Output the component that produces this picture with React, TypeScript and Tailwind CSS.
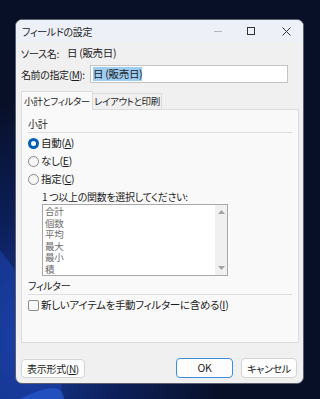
import React from "react";

const font = { fontFamily: '"Noto Sans CJK JP", "Noto Sans", sans-serif' };

function Radio({ checked, label, k }: { checked?: boolean; label: string; k: string }) {
  return (
    <div className="flex items-center h-[18px]">
      {checked ? (
        <span className="w-[11px] h-[11px] rounded-full bg-[#005fb8] flex items-center justify-center">
          <span className="w-[5px] h-[5px] rounded-full bg-white" />
        </span>
      ) : (
        <span className="w-[11px] h-[11px] rounded-full border border-[#8a8a8a] bg-[#f7f7f7]" />
      )}
      <span className="ml-[2px]">
        {label}(<span className="underline">{k}</span>)
      </span>
    </div>
  );
}

function Wallpaper() {
  return (
    <svg className="absolute inset-0" width="320" height="399" viewBox="0 0 320 399">
      <defs>
        <radialGradient id="g1" cx="0.1" cy="0.85" r="0.6">
          <stop offset="0" stopColor="#1a3fa8" />
          <stop offset="0.5" stopColor="#0d2160" />
          <stop offset="1" stopColor="#081029" />
        </radialGradient>
      </defs>
      <rect width="320" height="399" fill="#070d1d" />
      <rect width="320" height="399" fill="url(#g1)" opacity="0.9" />
      <path d="M0 250 C40 300 70 360 60 399 L0 399 Z" fill="#1c45b5" opacity="0.5" />
      <path d="M20 399 C50 385 62 384 64 399 Z" fill="#2a5ad0" opacity="0.7" />
    </svg>
  );
}

export default function App() {
  return (
    <div
      className="relative w-[320px] h-[399px] overflow-hidden text-[10.5px] tracking-[-0.3px] whitespace-nowrap text-[#1b1b1b] [font-feature-settings:'palt']"
      style={font}
    >
      <Wallpaper />
      <div className="relative pl-[15px] pt-[19px]">
        <div className="w-[289px] h-[365px] rounded-[7px] bg-[#f0f0f0] border border-[#5a5f6b] overflow-hidden flex flex-col">
          {/* title bar */}
          <div className="h-[22px] bg-[#eef0f8] flex items-center pl-[6px]">
            <span className="text-[10px] text-[#1b1b1b] flex-1 pt-[1px]">フィールドの設定</span>
            <span className="w-[8px] h-[1px] bg-[#b8b8b8] mr-[25px]" />
            <span className="w-[8px] h-[8px] border border-[#333] mr-[27px]" />
            <svg width="9" height="9" viewBox="0 0 9 9" className="mr-[12px]">
              <path d="M0.5 0.5 L8.5 8.5 M8.5 0.5 L0.5 8.5" stroke="#333" strokeWidth="1" />
            </svg>
          </div>
          <div className="flex flex-col px-[5px] flex-1">
            <div className="flex items-center h-[18px] mt-[2px] text-[10px]">
              <span>ソース名:</span>
              <span className="ml-[8px] text-[10.5px]">日 (販売日)</span>
            </div>
            <div className="flex items-center mt-[3px] h-[18px]">
              <span className="w-[69px] text-[10px] tracking-[-0.4px]">
                名前の指定(<span className="underline">M</span>):
              </span>
              <div className="w-[198px] h-[18px] bg-white border border-[#c4c4c4] flex items-center px-[2px]">
                <span className="bg-[#9ecdf2] leading-[14px]">日 (販売日)</span>
              </div>
            </div>
            {/* tabs */}
            <div className="flex mt-[8px] h-[19px] items-end relative z-10 text-[9.5px] tracking-[-0.4px]">
              <div className="h-[19px] w-[72px] bg-[#f9f9f9] border border-[#dcdcdc] border-b-0 flex items-center justify-center">
                小計とフィルター
              </div>
              <div className="h-[17px] w-[69px] bg-[#f0f0f0] border border-[#dcdcdc] border-l-0 flex items-center justify-center">
                レイアウトと印刷
              </div>
            </div>
            <div className="w-[278px] h-[234px] bg-[#f9f9f9] border border-[#dcdcdc] -mt-px px-[6px]">
              <div className="mt-[5px] h-[16px] text-[10px] flex items-center">小計</div>
              <div className="h-px bg-[#dedede] mt-[1px]" />
              <div className="mt-[1px] flex flex-col">
                <Radio checked label="自動" k="A" />
                <Radio label="なし" k="E" />
                <Radio label="指定" k="C" />
              </div>
              <div className="ml-[14px] h-[16px] text-[10px] flex items-center">1 つ以上の関数を選択してください:</div>
              <div className="ml-[14px] w-[186px] h-[72px] border border-[#a8a8a8] bg-white flex">
                <div className="flex-1 pl-[2px] pt-[1px] text-[9.5px] leading-[11.5px] text-[#6d6d6d]">
                  <div>合計</div>
                  <div>個数</div>
                  <div>平均</div>
                  <div>最大</div>
                  <div>最小</div>
                  <div>積</div>
                </div>
                <div className="w-[12px] bg-[#f0f0f0] flex flex-col justify-between items-center py-[5px]">
                  <svg width="7" height="4" viewBox="0 0 7 4">
                    <path d="M0 4 L3.5 0 L7 4 Z" fill="#a3a3a3" />
                  </svg>
                  <svg width="7" height="4" viewBox="0 0 7 4">
                    <path d="M0 0 L3.5 4 L7 0 Z" fill="#a3a3a3" />
                  </svg>
                </div>
              </div>
              <div className="mt-[1px] h-[16px] text-[10px] flex items-center">フィルター</div>
              <div className="h-px bg-[#dedede] mt-[1px]" />
              <div className="flex items-center h-[20px]">
                <span className="w-[11px] h-[11px] rounded-[2px] border border-[#8a8a8a] bg-[#f7f7f7]" />
                <span className="ml-[2px]">
                  新しいアイテムを手動フィルターに含める(<span className="underline">I</span>)
                </span>
              </div>
            </div>
            <div className="flex items-center mt-[15px]">
              <button className="w-[64px] h-[19px] rounded-[4px] border border-[#d4d4d4] bg-[#fdfdfd] text-[10px] flex items-center justify-center">
                表示形式(<span className="underline">N</span>)
              </button>
              <div className="flex-1" />
              <button className="w-[57px] h-[20px] rounded-[4px] border border-[#3b8fd9] bg-[#fdfdfd] text-[10.5px] flex items-center justify-center">
                OK
              </button>
              <button className="ml-[8px] mr-[1px] w-[56px] h-[20px] rounded-[4px] border border-[#d4d4d4] bg-[#fdfdfd] text-[10px] flex items-center justify-center">
                キャンセル
              </button>
            </div>
          </div>
        </div>
      </div>
    </div>
  );
}
